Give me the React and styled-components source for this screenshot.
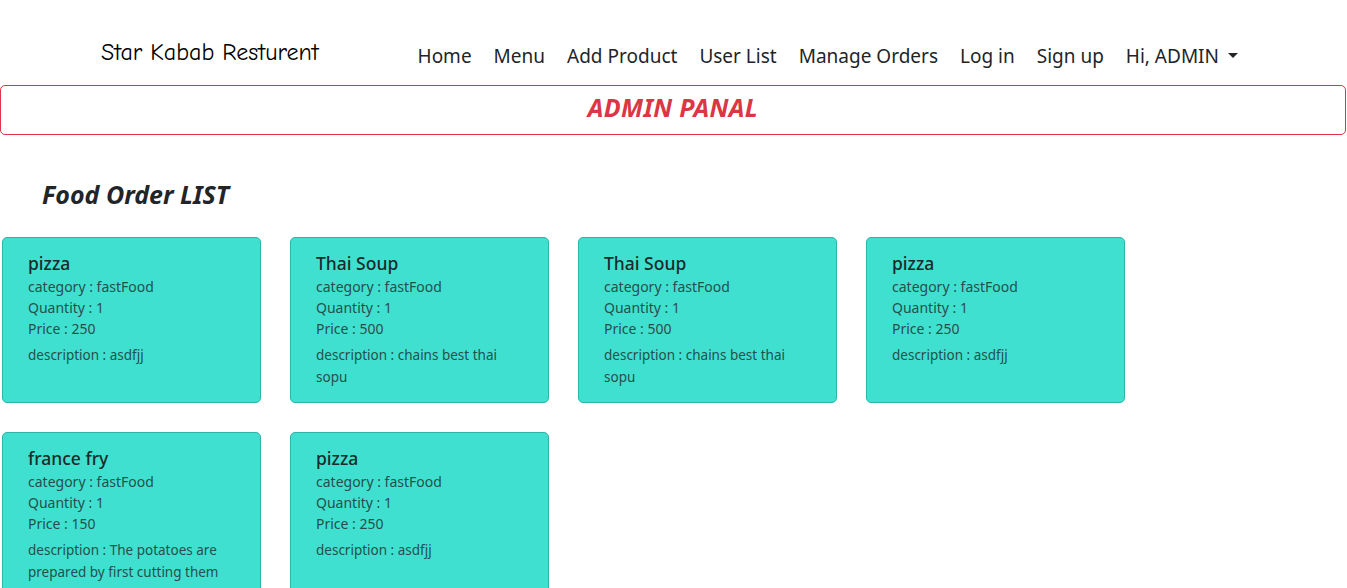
import React from 'react';
import styled, { createGlobalStyle } from 'styled-components';

const orders = [
  { name: 'pizza', category: 'fastFood', quantity: 1, price: 250, description: 'asdfjj' },
  { name: 'Thai Soup', category: 'fastFood', quantity: 1, price: 500, description: 'chains best thai sopu' },
  { name: 'Thai Soup', category: 'fastFood', quantity: 1, price: 500, description: 'chains best thai sopu' },
  { name: 'pizza', category: 'fastFood', quantity: 1, price: 250, description: 'asdfjj' },
  {
    name: 'france fry',
    category: 'fastFood',
    quantity: 1,
    price: 150,
    description:
      'The potatoes are prepared by first cutting them into even strips, then frying them in hot oil until golden and crisp.',
  },
  { name: 'pizza', category: 'fastFood', quantity: 1, price: 250, description: 'asdfjj' },
];

const navLinks = ['Home', 'Menu', 'Add Product', 'User List', 'Manage Orders', 'Log in', 'Sign up'];

const App = () => {
  return (
    <>
      <GlobalStyle />
      <Header>
        <Brand>Star Kabab Resturent</Brand>
        <Nav>
          {navLinks.map((link) => (
            <NavLink key={link} href="#">
              {link}
            </NavLink>
          ))}
          <Dropdown href="#">
            Hi, ADMIN
            <Caret />
          </Dropdown>
        </Nav>
      </Header>

      <AdminBox>
        <AdminTitle>ADMIN PANAL</AdminTitle>
      </AdminBox>

      <SectionTitle>Food Order LIST</SectionTitle>

      <CardGrid>
        {orders.map((order, i) => (
          <Card key={i}>
            <CardTitle>{order.name}</CardTitle>
            <CardLine>category : {order.category}</CardLine>
            <CardLine>Quantity : {order.quantity}</CardLine>
            <CardLine>Price : {order.price}</CardLine>
            <CardDesc>description : {order.description}</CardDesc>
          </Card>
        ))}
      </CardGrid>
    </>
  );
};

export default App;

const GlobalStyle = createGlobalStyle`
  * {
    box-sizing: border-box;
  }
  body {
    margin: 0;
    background: #fff;
    color: #212529;
    font-family: "Noto Sans", "Open Sans", sans-serif;
  }
`;

const Header = styled.header`
  display: flex;
  align-items: center;
  height: 85px;
  padding: 26px 109px 0 101px;
`;

const Brand = styled.div`
  font-family: "Comic Sans MS", "Comic Neue", cursive;
  font-size: 24px;
  color: #000;
  margin-top: -7px;
`;

const Nav = styled.nav`
  display: flex;
  align-items: center;
  gap: 22px;
  margin-left: auto;
`;

const NavLink = styled.a`
  font-size: 19px;
  color: #212529;
  text-decoration: none;
`;

const Dropdown = styled(NavLink)`
  display: flex;
  align-items: center;
  gap: 9px;
`;

const Caret = styled.span`
  width: 0;
  height: 0;
  border-left: 5px solid transparent;
  border-right: 5px solid transparent;
  border-top: 5px solid #212529;
`;

const AdminBox = styled.div`
  border: 1px solid #dc3545;
  border-radius: 5px;
  height: 50px;
  display: flex;
  align-items: center;
  justify-content: center;
  padding-bottom: 6px;
  margin-right: 1px;
`;

const AdminTitle = styled.h2`
  margin: 0;
  font-size: 25px;
  font-weight: 700;
  font-style: italic;
  color: #dc3545;
  letter-spacing: 0.3px;
`;

const SectionTitle = styled.h3`
  margin: 43px 0 0 42px;
  font-size: 25px;
  font-weight: 700;
  font-style: italic;
  color: #212529;
  line-height: 32px;
`;

const CardGrid = styled.div`
  display: grid;
  grid-template-columns: repeat(4, 259px);
  gap: 29px;
  padding: 27px 0 0 2px;
`;

const Card = styled.div`
  background: #40e0d0;
  border: 1px solid #2fb5a8;
  border-radius: 5px;
  padding: 13px 25px 14px;
  min-height: 166px;
`;

const CardTitle = styled.div`
  font-size: 17.5px;
  font-weight: 500;
  color: #1a2b2a;
  line-height: 25px;
`;

const CardLine = styled.div`
  font-size: 14px;
  line-height: 21px;
  color: #24504c;
`;

const CardDesc = styled.div`
  margin-top: 5px;
  font-size: 13.5px;
  line-height: 22px;
  color: #24504c;
`;
